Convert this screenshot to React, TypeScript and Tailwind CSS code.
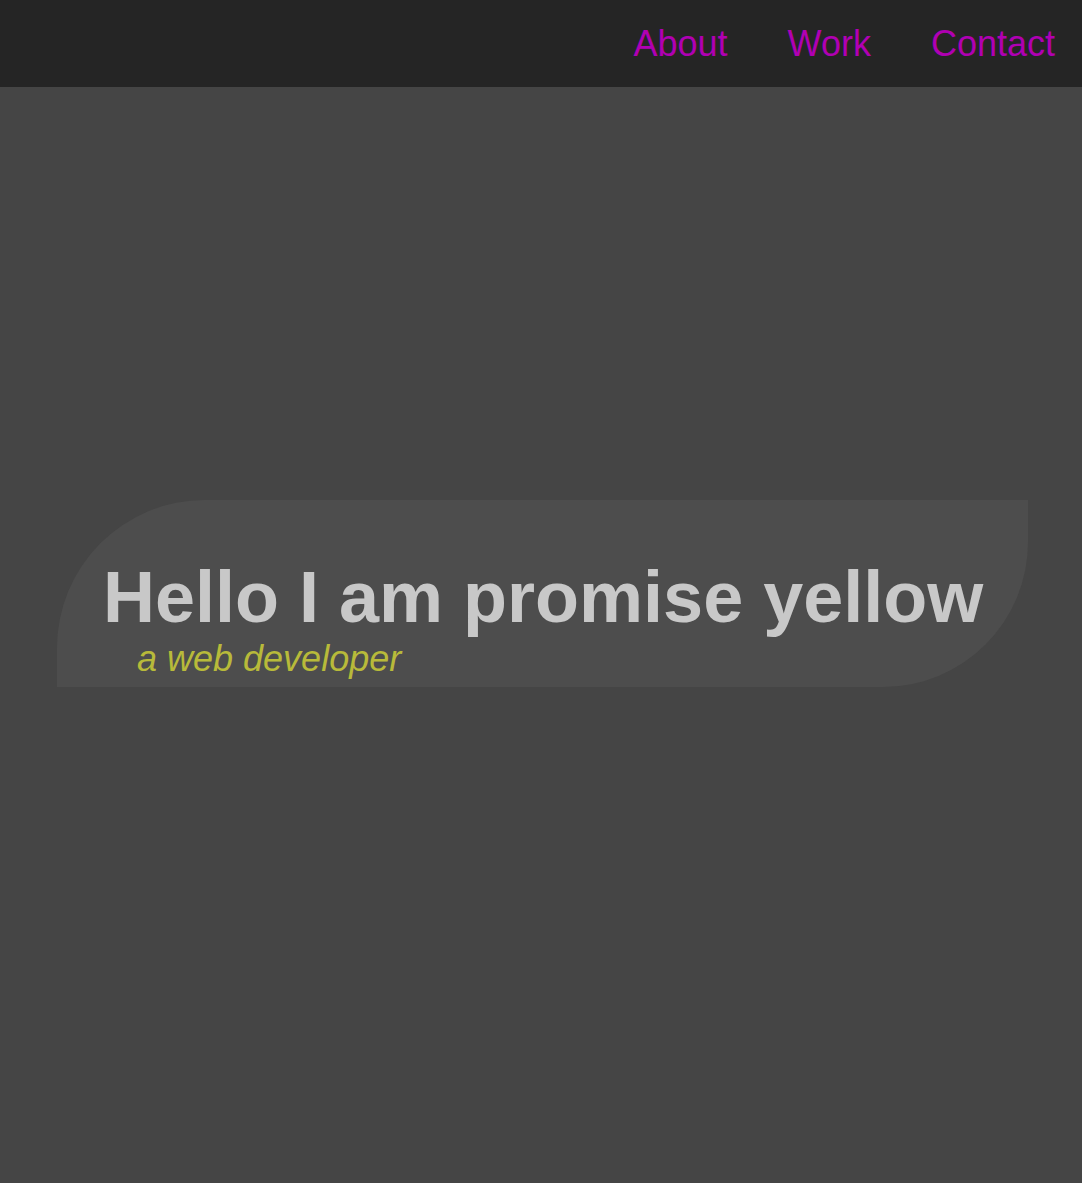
const links = ["About", "Work", "Contact"];

export default function App() {
  return (
    <div className="min-h-[1183px] bg-[#454545] font-['Liberation_Sans',Arial,sans-serif]">
      <nav className="h-[87px] bg-[#252525] flex justify-end items-start pt-[23px] pr-[27px] gap-[60px]">
        {links.map((l) => (
          <a key={l} href="#" className="text-[36px] leading-[41px] text-[#b000b3]">
            {l}
          </a>
        ))}
      </nav>
      <main className="pt-[413px]">
        <section className="ml-[57px] w-[971px] bg-[#4d4d4d] rounded-tl-[148px] rounded-br-[145px] pt-[57px] pb-[8px]">
          <h1 className="pl-[46px] text-[72px] leading-[80px] font-bold text-[#c8c8c8]">
            Hello I am promise yellow
          </h1>
          <p className="mt-[2px] pl-[80px] text-[36px] leading-[40px] italic text-[#b8ba3a]">
            a web developer
          </p>
        </section>
      </main>
    </div>
  );
}
